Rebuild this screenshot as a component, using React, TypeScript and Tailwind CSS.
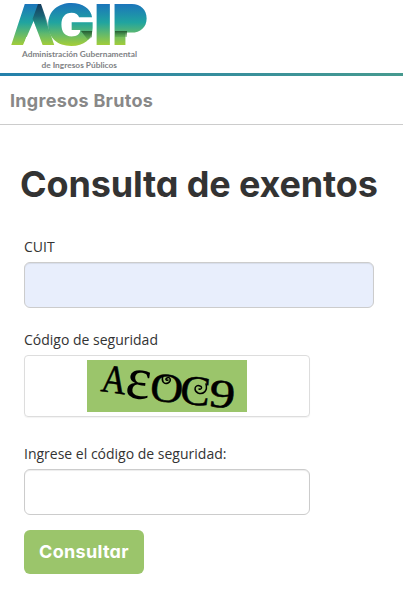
import React from "react";

const display = "font-['Inter','Liberation_Sans',sans-serif] font-bold [font-feature-settings:'cv11','ss03']";
const field = "block h-[46px] rounded-md border border-[#ccc] shadow-[inset_0_1px_1px_rgba(0,0,0,0.075)] outline-none px-3";

function Logo() {
  return (
    <svg width="150" height="73" viewBox="0 0 150 73" role="img" aria-label="AGIP" className="block overflow-visible">
      <defs>
        <linearGradient id="brand" gradientUnits="userSpaceOnUse" x1="0" y1="4" x2="0" y2="45">
          <stop offset="0" stopColor="#1b75bb" />
          <stop offset="0.45" stopColor="#20a4a0" />
          <stop offset="1" stopColor="#a2cd3a" />
        </linearGradient>
        <linearGradient id="fold" gradientUnits="userSpaceOnUse" x1="0" y1="4" x2="0" y2="34">
          <stop offset="0" stopColor="#153b5c" />
          <stop offset="0.4" stopColor="#185f70" stopOpacity="0.9" />
          <stop offset="1" stopColor="#3ba862" stopOpacity="0" />
        </linearGradient>
        <linearGradient id="shade" x1="0" y1="0" x2="0" y2="1">
          <stop offset="0" stopColor="#245c34" />
          <stop offset="1" stopColor="#4f9a42" stopOpacity="0.4" />
        </linearGradient>
      </defs>
      <g fill="url(#brand)" fontFamily="Inter, Liberation Sans, sans-serif" fontWeight="900" fontSize="56">
        <text x="10" y="44.700" textLength="45.5" lengthAdjust="spacingAndGlyphs">A</text>
        <text x="46" y="44.500" textLength="49" lengthAdjust="spacingAndGlyphs">G</text>
        <text x="93.500" y="44.700" textLength="19.500" lengthAdjust="spacingAndGlyphs">I</text>
        <text x="112" y="44.700" textLength="36" lengthAdjust="spacingAndGlyphs">P</text>
      </g>
      <path d="M29 8 H38 L43 30 H23 Z" fill="url(#brand)" />
      <path d="M33.600 21 L43 46 H22.500 L28 34 Z" fill="#fff" />
      <path d="M38 4 H41 L51.500 34 H38.500 L33.600 21 L32.500 19 Z" fill="url(#fold)" />
      <rect x="122" y="10" width="15" height="20.500" fill="url(#brand)" />
      <rect x="115" y="31" width="12" height="6" fill="url(#shade)" />
      <path d="M81 31 H92 V37 L88 40 Z" fill="url(#shade)" />
      <g fill="#808285" fontFamily="Lato, sans-serif" fontWeight="700" fontSize="7">
        <text x="22" y="57" textLength="115" lengthAdjust="spacingAndGlyphs">Administración Gubernamental</text>
        <text x="41.500" y="67.500" textLength="75.500" lengthAdjust="spacingAndGlyphs">de Ingresos Públicos</text>
      </g>
    </svg>
  );
}

function Captcha() {
  return (
    <svg width="160" height="52" viewBox="0 0 160 52" role="img" aria-label="AEOC9" className="block bg-[#9bc56b]">
      <g fontFamily="Liberation Serif, serif" fill="#000" stroke="#000" strokeWidth="0.5">
        <text transform="translate(13 31) rotate(8)" fontSize="40" textLength="25" lengthAdjust="spacingAndGlyphs">A</text>
        <text transform="translate(37 36.500) rotate(8)" fontSize="60" textLength="25" lengthAdjust="spacingAndGlyphs" strokeWidth="0">ε</text>
        <text transform="translate(62 40) rotate(6)" fontSize="41" textLength="33" lengthAdjust="spacingAndGlyphs">O</text>
        <text transform="translate(92 43) rotate(6)" fontSize="42" textLength="30" lengthAdjust="spacingAndGlyphs">C</text>
        <text transform="translate(121 46) rotate(6)" fontSize="40" textLength="26" lengthAdjust="spacingAndGlyphs">9</text>
      </g>
      <g fill="none" stroke="#000" strokeWidth="1.5" strokeLinecap="round">
        <path d="M76 16 C74 21 77 25 81 23 C85 21 83 16 80 18 C78 19 79 21 81 20" />
        <path d="M119 24 C121 31 116 35 111 33 C106 30 108 24 113 26 C116 27 114 30 112 29" />
      </g>
    </svg>
  );
}

export default function App() {
  return (
    <main className="h-[594px] w-full overflow-hidden bg-white font-['Open_Sans',sans-serif] text-sm text-[#333]">
      <header>
        <div className="h-[73px]"><Logo /></div>
        <div className="h-[3px] bg-linear-to-r from-[#2480ab] to-[#469a8f]" />
        <div className={`${display} flex h-[49px] items-center border-b border-[#ccc] pl-[10px] pt-[2px] text-lg tracking-[0.3px] text-[#888]`}>
          Ingresos Brutos
        </div>
      </header>
      <h1 className={`${display} mt-[39px] whitespace-nowrap pl-[20px] text-[36px] leading-[40px] tracking-[-0.15px]`}>Consulta de exentos</h1>
      <form className="pl-6 pt-[33px]">
        <label className="block h-[25px] leading-5">CUIT</label>
        <input aria-label="CUIT" className={`${field} w-[350px] bg-[#e8eefc]`} />
        <div className="mt-[22px] h-[25px] leading-5">Código de seguridad</div>
        <div className="flex h-[62px] w-[286px] justify-center rounded border border-[#ddd] pt-1 shadow-[0_1px_1px_rgba(0,0,0,0.05)]">
          <Captcha />
        </div>
        <label className="mt-[27px] block h-[25px] leading-5">Ingrese el código de seguridad:</label>
        <input aria-label="Código" className={`${field} w-[286px] bg-white`} />
        <button type="button" className={`${display} mt-[15px] block h-[44px] w-[120px] rounded-md bg-[#9bc56b] text-lg tracking-[0.3px] text-white`}>Consultar</button>
      </form>
    </main>
  );
}
